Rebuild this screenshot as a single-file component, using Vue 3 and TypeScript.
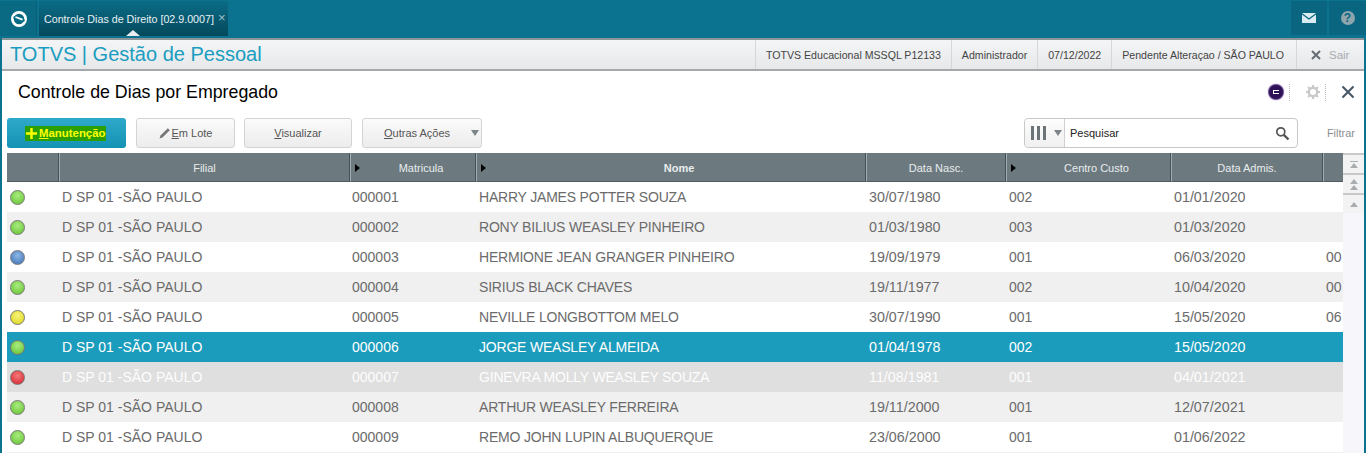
<template>
  <div class="shell">
    <header class="topbar">
      <div class="logo-tab">
        <svg width="18" height="18" viewBox="0 0 18 18">
          <circle cx="9" cy="9" r="6.6" fill="none" stroke="#fff" stroke-width="2.8" />
          <path d="M3.5 7.2 L14.5 10.8" stroke="#0b7290" stroke-width="2.6" />
          <path d="M5.5 7 L12.5 9.6" stroke="#fff" stroke-width="1.7" />
        </svg>
      </div>
      <div class="prog-tab">
        <span>Controle Dias de Direito [02.9.0007]</span>
        <span class="tab-close">×</span>
        <i class="tab-caret"></i>
      </div>
      <div class="top-spacer"></div>
      <div class="top-btn">
        <svg width="14" height="10" viewBox="0 0 14 10">
          <path d="M0 0H14L7 5.2Z" fill="#d8ecf2" />
          <path d="M0 1.6L7 6.8L14 1.6V10H0Z" fill="#d8ecf2" />
        </svg>
      </div>
      <div class="top-btn">
        <span class="help">?</span>
      </div>
    </header>

    <div class="body-frame">
      <div class="appbar">
        <div class="app-title">TOTVS | Gestão de Pessoal</div>
        <div class="app-info">
          <span class="info-item">TOTVS Educacional MSSQL P12133</span>
          <span class="info-item">Administrador</span>
          <span class="info-item">07/12/2022</span>
          <span class="info-item pend">Pendente Alteraçao / SÃO PAULO</span>
          <span class="info-item sair">
            <svg width="10" height="10" viewBox="0 0 10 10">
              <path d="M1 1L9 9M9 1L1 9" stroke="#666c74" stroke-width="2" />
            </svg>
            Sair
          </span>
        </div>
      </div>

      <div class="title-row">
        <h1>Controle de Dias por Empregado</h1>
        <div class="title-icons">
          <span class="badge"><i></i></span>
          <span class="sep"></span>
          <svg class="gear" width="14" height="14" viewBox="0 0 14 14">
            <circle cx="7" cy="7" r="4.2" fill="none" stroke="#c9c9c9" stroke-width="2.4" />
            <path d="M7 0V3M7 11V14M0 7H3M11 7H14M2 2L4 4M10 10L12 12M12 2L10 4M4 10L2 12" stroke="#c9c9c9" stroke-width="2" />
          </svg>
          <span class="sep narrow"></span>
          <svg class="close" width="14" height="14" viewBox="0 0 14 14">
            <path d="M1.5 1.5L12.5 12.5M12.5 1.5L1.5 12.5" stroke="#4a5a6a" stroke-width="2.2" />
          </svg>
        </div>
      </div>

      <div class="toolbar">
        <button class="btn primary">
          <span class="mark">
            <svg width="11" height="11" viewBox="0 0 11 11">
              <path d="M5.5 0V11M0 5.5H11" stroke="#ffff00" stroke-width="2.4" />
            </svg>
            <span><u>M</u>anutenção</span>
          </span>
        </button>
        <button class="btn lote">
          <svg width="12" height="12" viewBox="0 0 12 12">
            <path d="M0.5 11.5L1.5 8.5L8.8 1.2L10.8 3.2L3.5 10.5Z" fill="#777" />
          </svg>
          <span><u>E</u>m Lote</span>
        </button>
        <button class="btn visual"><span><u>V</u>isualizar</span></button>
        <button class="btn outras">
          <span><u>O</u>utras Ações</span>
          <i class="caret"></i>
        </button>
        <div class="tool-spacer"></div>
        <div class="search">
          <div class="col-pick">
            <span class="bars"><i></i><i></i><i></i></span>
            <i class="caret"></i>
          </div>
          <span class="search-text">Pesquisar</span>
          <svg width="15" height="15" viewBox="0 0 15 15">
            <circle cx="5.8" cy="5.8" r="4" fill="none" stroke="#555" stroke-width="1.7" />
            <path d="M8.8 8.8L13.5 13.5" stroke="#555" stroke-width="2.4" />
          </svg>
        </div>
        <span class="filtrar">Filtrar</span>
      </div>

      <div class="browse">
        <div class="table">
          <div class="head">
            <div class="hc"></div>
            <div v-for="c in columns" :key="c.label" class="hc" :class="{ strong: c.strong, sorted: c.sort }">
              <i v-if="c.sort" class="sort"></i>{{ c.label }}
            </div>
            <div class="hc"></div>
          </div>
          <div v-for="r in rows" :key="r.mat" class="row" :class="r.cls">
            <div class="cell led-cell"><span class="led" :class="r.led"></span></div>
            <div class="cell">D SP 01 -SÃO PAULO</div>
            <div class="cell mat">{{ r.mat }}</div>
            <div class="cell name">{{ r.nome }}</div>
            <div class="cell date">{{ r.nasc }}</div>
            <div class="cell">{{ r.cc }}</div>
            <div class="cell date">{{ r.adm }}</div>
            <div class="cell">{{ r.extra }}</div>
          </div>
        </div>
        <div class="scroll">
          <div class="sbtn"><i class="bar"></i><i class="up"></i></div>
          <div class="sbtn"><i class="up"></i><i class="up"></i></div>
          <div class="sbtn"><i class="up"></i></div>
        </div>
      </div>
    </div>
  </div>
</template>

<script setup lang="ts">
interface Row {
  mat: string;
  nome: string;
  nasc: string;
  cc: string;
  adm: string;
  extra: string;
  led: string;
  cls: string;
}

const columns = [
  { label: "Filial", sort: false, strong: false },
  { label: "Matricula", sort: true, strong: false },
  { label: "Nome", sort: true, strong: true },
  { label: "Data Nasc.", sort: false, strong: false },
  { label: "Centro Custo", sort: true, strong: false },
  { label: "Data Admis.", sort: false, strong: false },
];

const rows: Row[] = [
  { mat: "000001", nome: "HARRY JAMES POTTER SOUZA", nasc: "30/07/1980", cc: "002", adm: "01/01/2020", extra: "", led: "green", cls: "" },
  { mat: "000002", nome: "RONY BILIUS WEASLEY PINHEIRO", nasc: "01/03/1980", cc: "003", adm: "01/03/2020", extra: "", led: "green", cls: "alt" },
  { mat: "000003", nome: "HERMIONE JEAN GRANGER PINHEIRO", nasc: "19/09/1979", cc: "001", adm: "06/03/2020", extra: "00", led: "blue", cls: "" },
  { mat: "000004", nome: "SIRIUS BLACK CHAVES", nasc: "19/11/1977", cc: "002", adm: "10/04/2020", extra: "00", led: "green", cls: "alt" },
  { mat: "000005", nome: "NEVILLE LONGBOTTOM MELO", nasc: "30/07/1990", cc: "001", adm: "15/05/2020", extra: "06", led: "yellow", cls: "" },
  { mat: "000006", nome: "JORGE WEASLEY ALMEIDA", nasc: "01/04/1978", cc: "002", adm: "15/05/2020", extra: "", led: "green", cls: "selected" },
  { mat: "000007", nome: "GINEVRA MOLLY WEASLEY SOUZA", nasc: "11/08/1981", cc: "001", adm: "04/01/2021", extra: "", led: "red", cls: "disabled" },
  { mat: "000008", nome: "ARTHUR WEASLEY FERREIRA", nasc: "19/11/2000", cc: "001", adm: "12/07/2021", extra: "", led: "green", cls: "alt" },
  { mat: "000009", nome: "REMO JOHN LUPIN ALBUQUERQUE", nasc: "23/06/2000", cc: "001", adm: "01/06/2022", extra: "", led: "green", cls: "" },
];
</script>

<style>
html,
body {
  margin: 0;
  background: #fff;
  overflow: hidden;
}
</style>

<style scoped>
.shell {
  width: 1366px;
  height: 453px;
  overflow: hidden;
  background: #0b7290;
  font-family: "Liberation Sans", Arial, sans-serif;
  display: flex;
  flex-direction: column;
}

.topbar {
  height: 38px;
  padding-top: 1px;
  box-sizing: border-box;
  display: flex;
  flex: none;
}

.logo-tab {
  width: 37px;
  height: 35px;
  padding-left: 2px;
  box-sizing: border-box;
  border-right: 1px solid #0a5f78;
  background: #0a6a84;
  display: flex;
  align-items: center;
  justify-content: center;
}

.prog-tab {
  position: relative;
  margin-left: 2px;
  width: 189px;
  height: 35px;
  padding-left: 5px;
  box-sizing: border-box;
  background: linear-gradient(#0b6c86, #04495c);
  color: #e8f1f4;
  font-size: 10.7px;
  white-space: nowrap;
  display: flex;
  align-items: center;
  gap: 4px;
}

.tab-close {
  color: #9fc0cb;
  font-size: 13px;
  margin-top: -3px;
}

.tab-caret {
  position: absolute;
  left: 87px;
  bottom: 0;
  border: 7px solid transparent;
  border-top: 0;
  border-bottom: 6px solid #e9edf0;
}

.top-spacer {
  flex: 1;
}

.top-btn {
  width: 36px;
  height: 34px;
  margin-right: 2px;
  background: #0a6680;
  display: flex;
  align-items: center;
  justify-content: center;
}

.top-btn:last-child {
  margin-right: 0;
  width: 37px;
}

.help {
  width: 14px;
  height: 14px;
  border-radius: 50%;
  background: #8fa5ad;
  color: #0a6680;
  font-size: 12px;
  font-weight: bold;
  line-height: 14px;
  text-align: center;
}

.body-frame {
  flex: 1;
  margin: 0 2px;
  background: #fff;
  min-height: 0;
}

.appbar {
  height: 33px;
  box-sizing: border-box;
  border-top: 2px solid #8e9598;
  border-bottom: 2px solid #a4a9ac;
  background: linear-gradient(#f4f5f6, #e6e8ea);
  display: flex;
  align-items: center;
  justify-content: space-between;
}

.app-title {
  padding-left: 8px;
  font-size: 20px;
  color: #1a9dc0;
}

.app-info {
  height: 100%;
  display: flex;
  font-size: 10.6px;
  color: #444;
}

.info-item {
  display: flex;
  align-items: center;
  padding: 0 10px;
  border-left: 1px solid #d5d8da;
}

.info-item.pend {
  padding-right: 12px;
}

.info-item.sair {
  width: 68px;
  box-sizing: border-box;
  padding: 0 0 0 14px;
  color: #a8abb0;
  font-size: 11.5px;
  gap: 8px;
}

.title-row {
  height: 47px;
  padding: 0 9px 5px 16px;
  box-sizing: border-box;
  display: flex;
  align-items: center;
  justify-content: space-between;
}

h1 {
  margin: 0;
  font-size: 17.8px;
  font-weight: normal;
  color: #000;
}

.title-icons {
  display: flex;
  align-items: center;
}

.badge {
  width: 14px;
  height: 14px;
  border-radius: 50%;
  background: #2d1257;
  box-shadow: 0 0 1px 1px #5d3a8e;
  display: flex;
  align-items: center;
  justify-content: center;
}

.badge i {
  width: 6px;
  height: 4px;
  border: 1px solid #fff;
  border-right: 0;
  box-sizing: border-box;
}

.sep {
  height: 17px;
  margin-left: 6px;
  border-left: 1px dotted #bbb;
}

.sep.narrow {
  margin-left: 5px;
}

.gear {
  margin-left: 16px;
}

.close {
  margin-left: 15px;
}

.toolbar {
  height: 30px;
  padding: 0 9px 0 5px;
  display: flex;
  align-items: stretch;
}

.btn {
  margin: 0;
  padding: 0;
  border: 1px solid #d4d4d4;
  border-radius: 3px;
  background: linear-gradient(#fbfbfb, #ececec);
  color: #555;
  font-family: inherit;
  font-size: 11px;
  display: flex;
  align-items: center;
  justify-content: center;
  gap: 1px;
}

.btn.primary {
  width: 119px;
  border: 0;
  background: linear-gradient(#2fa9c9, #1492b4);
  justify-content: flex-start;
  padding-left: 18px;
}

.mark {
  background: #2a9f06;
  color: #ffff00;
  height: 15px;
  padding-right: 1px;
  font-size: 11.4px;
  font-weight: bold;
  display: inline-flex;
  align-items: center;
  gap: 2px;
}

.mark svg {
  margin-left: 1px;
}

.btn.lote {
  width: 99px;
  margin-left: 10px;
}

.btn.visual {
  width: 108px;
  margin-left: 9px;
}

.btn.outras {
  width: 120px;
  margin-left: 10px;
  padding-left: 21px;
  justify-content: space-between;
  padding-right: 2px;
}

.caret {
  border: 4px solid transparent;
  border-top: 6px solid #7d8589;
  border-bottom: 0;
}

.tool-spacer {
  flex: 1;
}

.search {
  width: 274px;
  box-sizing: border-box;
  border: 1px solid #c8c8c8;
  border-radius: 4px;
  background: #fff;
  display: flex;
  align-items: center;
  padding-right: 7px;
}

.col-pick {
  width: 40px;
  height: 100%;
  flex: none;
  box-sizing: border-box;
  border-right: 1px solid #d0d0d0;
  background: linear-gradient(#fdfdfd, #f0f0f0);
  border-radius: 4px 0 0 4px;
  display: flex;
  align-items: center;
  padding-left: 6px;
  gap: 8px;
}

.bars {
  display: flex;
  gap: 3px;
}

.bars i {
  width: 3px;
  height: 14px;
  background: #6c7478;
}

.search-text {
  flex: 1;
  padding-left: 5px;
  font-size: 11px;
  color: #222;
}

.filtrar {
  width: 57px;
  text-align: right;
  align-self: center;
  font-size: 11px;
  color: #8a8f92;
}

.browse {
  margin: 5px 0 0 5px;
  display: flex;
}

.table {
  width: 1336px;
  flex: none;
  border-bottom: 1px solid #f0f0f0;
}

.head,
.row {
  display: grid;
  grid-template-columns: 52px 291px 126px 390px 140px 165px 152px 20px;
}

.head {
  height: 29px;
}

.hc {
  position: relative;
  display: flex;
  align-items: center;
  justify-content: center;
  box-sizing: border-box;
  padding-top: 1px;
  background: #6c7a80;
  border-right: 1px solid #46525a;
  border-left: 1px solid #a3adb0;
  border-bottom: 1px solid #4f5b60;
  color: #e9eced;
  font-size: 11px;
}

.hc:first-child {
  border-left: 0;
}

.hc:last-child {
  border-right: 0;
}

.hc.strong {
  font-weight: bold;
}

.hc.sorted {
  padding-left: 16px;
}

.sort {
  position: absolute;
  left: 4px;
  top: 11px;
  border: 4px solid transparent;
  border-left: 5px solid #000;
  border-right: 0;
}

.row {
  height: 30px;
  background: #fff;
  color: #6b6b6b;
  font-size: 14px;
}

.row.alt {
  background: #f0f0f0;
}

.row.selected {
  background: #1c9cbd;
  color: #fff;
}

.row.disabled {
  background: #dfdfdf;
  color: #fdfdfd;
}

.cell {
  padding-left: 3px;
  line-height: 30px;
  white-space: nowrap;
  overflow: hidden;
}

.cell.mat {
  padding-left: 2px;
}

.cell.name {
  letter-spacing: -0.2px;
}

.cell.date {
  font-size: 14.3px;
}

.led-cell {
  display: flex;
  align-items: center;
}

.led {
  width: 15px;
  height: 15px;
  border-radius: 50%;
  border: 1px solid #777;
  box-sizing: border-box;
}

.led.green {
  background: radial-gradient(circle at 50% 35%, #a9ec80, #62c12e);
}

.led.blue {
  background: radial-gradient(circle at 50% 35%, #8db8e6, #3a6fb5);
}

.led.yellow {
  background: radial-gradient(circle at 50% 35%, #f6f47a, #dcd315);
}

.led.red {
  background: radial-gradient(circle at 50% 35%, #f57a7a, #d31f2a);
}

.scroll {
  width: 21px;
  flex: none;
  display: flex;
  flex-direction: column;
  background: #f7f7fb;
}

.sbtn {
  height: 20px;
  box-sizing: border-box;
  border-top: 2px solid #c8c8c8;
  background: #f3f3f3;
  display: flex;
  flex-direction: column;
  align-items: center;
  justify-content: center;
  gap: 1px;
}

.sbtn .up {
  border: 4px solid transparent;
  border-top: 0;
  border-bottom: 5px solid #a9adaf;
}

.sbtn .bar {
  width: 8px;
  height: 1px;
  background: #a9adaf;
}
</style>
